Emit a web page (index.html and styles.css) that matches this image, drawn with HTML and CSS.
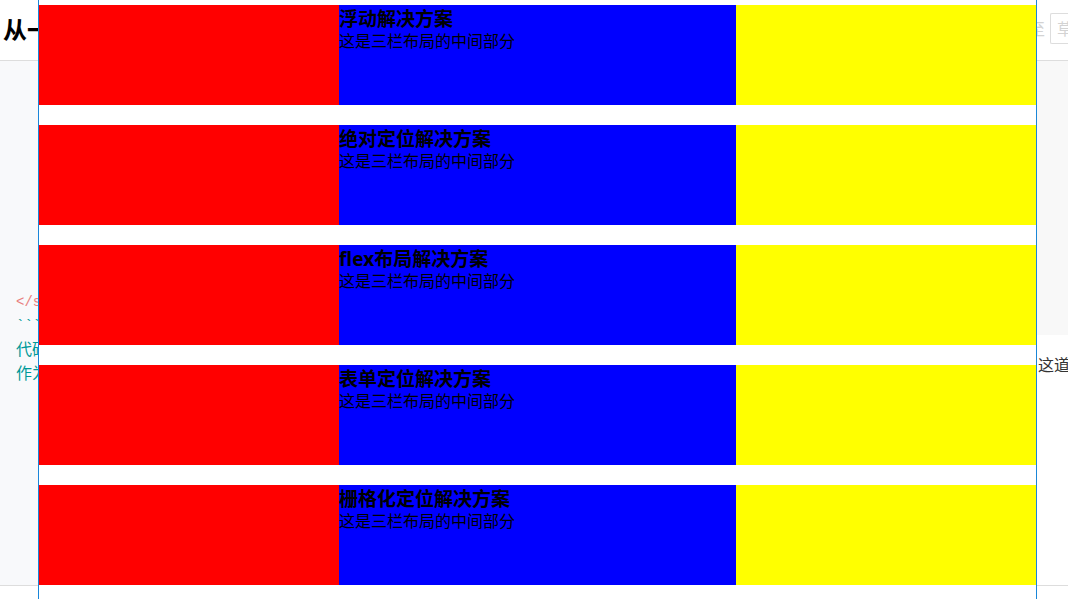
FILE: index.html
```html
<!DOCTYPE html>
<html lang="zh-CN">
<head>
<meta charset="utf-8">
<title>三栏布局</title>
<link rel="stylesheet" href="styles.css">
</head>
<body>
<div class="editor">
  <header class="topbar">
    <h1 class="title">从一</h1>
    <div class="actions"><span class="hint">至</span><button class="draft" type="button">草</button></div>
  </header>
  <div class="panes">
    <div class="source">
      <div class="code tag">&lt;/s</div>
      <div class="code fence">```</div>
      <div class="code prose">代码</div>
      <div class="code prose">作为</div>
    </div>
    <div class="preview">
      <div class="sample"></div>
      <p class="para">这道</p>
    </div>
  </div>
  <footer class="bottombar"></footer>
</div>
<main class="demo">
  <section class="row">
    <div class="left"></div>
    <div class="center"><h2 class="heading">浮动解决方案</h2><p class="text">这是三栏布局的中间部分</p></div>
    <div class="right"></div>
  </section>
  <section class="row">
    <div class="left"></div>
    <div class="center"><h2 class="heading">绝对定位解决方案</h2><p class="text">这是三栏布局的中间部分</p></div>
    <div class="right"></div>
  </section>
  <section class="row">
    <div class="left"></div>
    <div class="center"><h2 class="heading">flex布局解决方案</h2><p class="text">这是三栏布局的中间部分</p></div>
    <div class="right"></div>
  </section>
  <section class="row">
    <div class="left"></div>
    <div class="center"><h2 class="heading">表单定位解决方案</h2><p class="text">这是三栏布局的中间部分</p></div>
    <div class="right"></div>
  </section>
  <section class="row">
    <div class="left"></div>
    <div class="center"><h2 class="heading">栅格化定位解决方案</h2><p class="text">这是三栏布局的中间部分</p></div>
    <div class="right"></div>
  </section>
</main>
</body>
</html>
```
FILE: styles.css
```css
* {
  box-sizing: border-box;
  margin: 0;
  padding: 0;
}

body {
  position: relative;
  min-height: 100vh;
  overflow: hidden;
  background: #fff;
  color: #000;
  font-family: "Open Sans", "Noto Sans CJK SC", sans-serif;
  font-size: 16px;
}

.editor {
  display: flex;
  flex-direction: column;
  min-height: 100vh;
}

.topbar {
  display: flex;
  align-items: center;
  justify-content: space-between;
  height: 61px;
  padding-left: 3px;
  border-bottom: 1px solid #ddd;
}

.title {
  font-size: 24px;
  line-height: 32px;
}

.actions {
  display: flex;
  align-items: center;
  gap: 5px;
  height: 100%;
  padding-bottom: 4px;
  color: #d3d3d3;
}

.draft {
  width: 18px;
  height: 31px;
  padding-left: 6px;
  border: 1px solid #ddd;
  border-right: 0;
  border-radius: 2px 0 0 2px;
  background: #fff;
  color: #d3d3d3;
  font: inherit;
  text-align: left;
}

.panes {
  display: grid;
  grid-template-columns: 1fr 1fr;
  flex: 1;
}

.source {
  padding: 229px 16px 0;
  background: #f8f9fb;
}

.code {
  font-family: "Liberation Mono", "Noto Sans CJK SC", monospace;
  font-size: 14px;
  line-height: 24px;
}

.tag {
  color: #e88080;
}

.fence,
.prose {
  color: #099;
}

.fence {
  padding-bottom: 1px;
}

.prose {
  font-size: 16px;
}

.preview {
  text-align: right;
}

.sample {
  height: 274px;
  background: #f8f8f8;
}

.para {
  margin-top: 18px;
  margin-right: -2px;
  color: #333;
  line-height: 24px;
}

.bottombar {
  height: 14px;
  border-top: 1px solid #ddd;
}

.demo {
  position: absolute;
  inset: 0 31px 0 38px;
  display: flex;
  flex-direction: column;
  gap: 20px;
  padding-top: 5px;
  border: solid #1a86d9;
  border-width: 0 1px;
  background: #fff;
}

.row {
  display: grid;
  grid-template-columns: 300px 1fr 300px;
  min-height: 100px;
}

.left {
  background: #f00;
}

.center {
  background: #00f;
}

.right {
  background: #ff0;
}

.heading {
  font-size: 19px;
  line-height: 28px;
}

.text {
  line-height: 17px;
}
```
